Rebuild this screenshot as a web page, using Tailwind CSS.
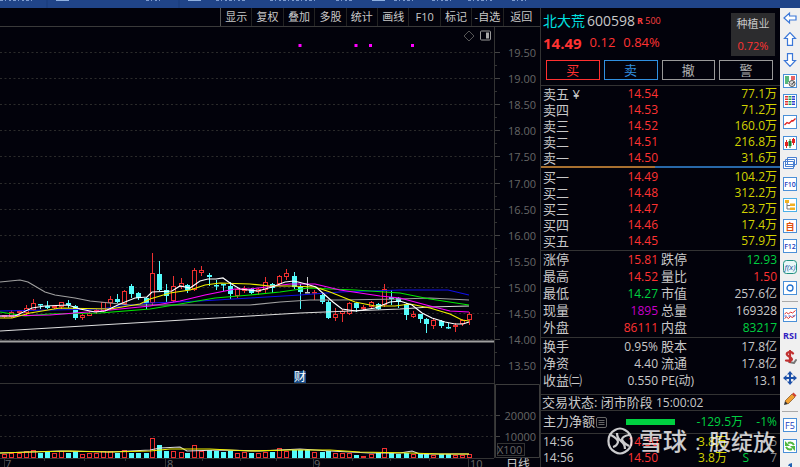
<!DOCTYPE html>
<html lang="zh-CN">
  <head>
    <meta charset="UTF-8" />
    <meta name="viewport" content="width=device-width, initial-scale=1.0" />
    <script src="https://cdn.jsdelivr.net/npm/@tailwindcss/browser@4"></script>
    <title>北大荒 600598</title>
  </head>

  <body class="h-screen flex flex-col overflow-hidden bg-[#02020b] text-[#c8c8c8] text-xs font-['Open_Sans','Noto_Sans_CJK_SC',sans-serif]">
    <!-- Window title strip -->
    <header class="h-2 shrink-0 bg-[#204488] overflow-hidden">
      <svg class="h-2 w-[800px]" viewBox="0 0 800 8" aria-hidden="true">
        <path d="M47 0v8M179 0v8" stroke="#183a78" />
        <path d="M56 0h13v1h-13zM188 0h13v1h-13zM372 0h13v1h-13z" fill="#8fb0e0" />
        <path d="M0 .5h32M146 .5h14M216 .5h30M270 .5h46M336 .5h16M394 .5h20M432 .5h22M468 .5h24M512 .5h14" stroke="#7f9cd0" stroke-dasharray="3 2 1 3 2 2" />
      </svg>
    </header>

    <div class="flex flex-1 min-h-0">
      <!-- Chart -->
      <main class="flex-1 min-w-0">
        <nav class="h-[19px] flex justify-end border-b border-[#3a3a3a]">
          <div class="grid grid-cols-10 w-[315px] mr-[5px] text-[11px] leading-[18px] whitespace-nowrap divide-x divide-[#222] border-l border-[#555]">
            <button>显示</button>
            <button>复权</button>
            <button>叠加</button>
            <button>多股</button>
            <button>统计</button>
            <button>画线</button>
            <button>F10</button>
            <button>标记</button>
            <button>-自选</button>
            <button class="pl-1">返回</button>
          </div>
        </nav>
        <svg id="chart" class="block w-full" viewBox="0 27 540 440">
          <g id="grid"></g>
          <g stroke="#333" fill="none">
            <path d="M494.5 27V458M0 383.5H494M0 458.5H494" />
            <path d="M495.5 384.5H539.5V457.5H495.5z" stroke="#3c3c3c" />
            <path d="M4.5 458v9M44.5 458v3M84.5 458v3M125.5 458v3M165.5 458v9M202.5 458v3M240.5 458v3M276.5 458v3M313.5 458v9M352.5 458v3M390.5 458v3M429.5 458v3M468.5 458v9" />
            <rect x="497.5" y="443.5" width="27" height="12" />
          </g>
          <g fill="#666" font-size="11">
            <text x="497" y="454">X100</text>
            <text x="5" y="468">7</text>
            <text x="167" y="468">8</text>
            <text x="314" y="468">9</text>
            <text x="470" y="468">10</text>
          </g>
          <text x="506" y="469" font-size="12" fill="#ccc">日线</text>
          <path d="M469 31l5 5l-5 5l-5 -5z" fill="none" stroke="#555" />
          <rect x="480.5" y="31" width="10" height="9" rx="1" fill="none" stroke="#999" />
          <path d="M486 32.5h3v6h-3z" fill="#aaa" />
          <path d="M298.500 44h3v3h-3zM354.500 44h3v3h-3zM369 44h3v3h-3zM411 44h3v3h-3z" fill="#f0f" />
          <path d="M0 341.500H494" stroke="#a0a0a0" stroke-width="2" />
          <rect x="294" y="371" width="12" height="12" fill="#174a85" />
          <text x="294" y="381" font-size="12" fill="#fff">财</text>
          <g id="candles"></g>
          <g id="lines" fill="none" stroke-width="1.200"></g>
        </svg>
      </main>

      <!-- Quote panel -->
      <section class="relative w-[240px] shrink-0 border-l border-[#333] overflow-hidden whitespace-nowrap">
        <div class="border-b border-[#333] pt-[5px] pb-[5px]">
          <div class="flex justify-between pl-[2px] pr-[5px]">
            <div>
              <h1 class="flex items-center h-4 text-sm">
                <span class="text-[#00e0e0]">北大荒</span>
                <span class="ml-[2px]">600598</span>
                <span class="ml-[2px] text-[9px] text-[#ff4040]"><b>R</b> 500</span>
              </h1>
              <p class="flex items-center gap-2 h-4 mt-[6px] text-[13px] text-[#ff3232]">
                <b class="text-[15px]">14.49</b>
                <span>0.12</span>
                <span>0.84%</span>
              </p>
            </div>
            <div class="w-11 h-[43px] bg-[#2c2c2e] text-[11px] text-center">
              <p class="leading-[22px]">种植业</p>
              <p class="leading-[21px] text-[#ff3232]">0.72%</p>
            </div>
          </div>
          <div class="grid grid-cols-4 gap-1 mt-1 pl-[5px] pr-[7px] text-[13px]">
            <button class="h-5 leading-[18px] border border-[#ff3030] text-[#ff3030]">买</button>
            <button class="h-5 leading-[18px] border border-[#3090e0] text-[#3090e0]">卖</button>
            <button class="h-5 leading-[18px] border border-[#999] text-[#b0b0b0]">撤</button>
            <button class="h-5 leading-[18px] border border-[#999] text-[#b0b0b0]">警</button>
          </div>
        </div>

        <!-- Order book -->
        <div class="pl-[2px] pr-[3px]">
          <table class="w-full table-fixed leading-4 text-right">
            <colgroup><col class="w-[50px]" /><col class="w-[65px]" /><col /></colgroup>
            <tbody class="[&_th]:text-left [&_th]:font-normal [&_th]:text-[13px] text-[#d2d200] [&_th]:text-[#c8c8c8]">
              <tr><th scope="row">卖五 ¥</th><td class="text-[#ff3232]">14.54</td><td>77.1万</td></tr>
              <tr><th scope="row">卖四</th><td class="text-[#ff3232]">14.53</td><td>71.2万</td></tr>
              <tr><th scope="row">卖三</th><td class="text-[#ff3232]">14.52</td><td>160.0万</td></tr>
              <tr><th scope="row">卖二</th><td class="text-[#ff3232]">14.51</td><td>216.8万</td></tr>
              <tr><th scope="row">卖一</th><td class="text-[#ff3232]">14.50</td><td>31.6万</td></tr>
            </tbody>
          </table>
        </div>
        <div class="flex h-[2px] mb-px">
          <div class="w-[114px] bg-[#a87030]"></div>
          <div class="flex-1 bg-[#2868a8]"></div>
        </div>
        <div class="pl-[2px] pr-[3px] pb-[1px] border-b border-[#333]">
          <table class="w-full table-fixed leading-4 text-right">
            <colgroup><col class="w-[50px]" /><col class="w-[65px]" /><col /></colgroup>
            <tbody class="[&_th]:text-left [&_th]:font-normal [&_th]:text-[13px] text-[#d2d200] [&_th]:text-[#c8c8c8]">
              <tr><th scope="row">买一</th><td class="text-[#ff3232]">14.49</td><td>104.2万</td></tr>
              <tr><th scope="row">买二</th><td class="text-[#ff3232]">14.48</td><td>312.2万</td></tr>
              <tr><th scope="row">买三</th><td class="text-[#ff3232]">14.47</td><td>23.7万</td></tr>
              <tr><th scope="row">买四</th><td class="text-[#ff3232]">14.46</td><td>17.4万</td></tr>
              <tr><th scope="row">买五</th><td class="text-[#ff3232]">14.45</td><td>57.9万</td></tr>
            </tbody>
          </table>
        </div>

        <!-- Statistics -->
        <div class="pl-[2px] pr-[3px] pb-[1px] border-b border-[#333]">
          <table class="w-full table-fixed leading-[17px] text-right">
            <colgroup><col class="w-[50px]" /><col class="w-[65px]" /><col class="w-[44px]" /><col /></colgroup>
            <tbody class="[&_th]:text-left [&_th]:font-normal [&_th]:text-[13px] [&_td+th]:pl-[3px]">
              <tr><th scope="row">涨停</th><td class="text-[#ff3232]">15.81</td><th scope="row">跌停</th><td class="text-[#00d040]">12.93</td></tr>
              <tr><th scope="row">最高</th><td class="text-[#ff3232]">14.52</td><th scope="row">量比</th><td class="text-[#ff3232]">1.50</td></tr>
              <tr><th scope="row">最低</th><td class="text-[#00d040]">14.27</td><th scope="row">市值</th><td>257.6亿</td></tr>
              <tr><th scope="row">现量</th><td class="text-[#c800c8]">1895</td><th scope="row">总量</th><td>169328</td></tr>
              <tr><th scope="row">外盘</th><td class="text-[#ff3232]">86111</td><th scope="row">内盘</th><td class="text-[#00d040]">83217</td></tr>
            </tbody>
          </table>
        </div>
        <div class="pl-[2px] pr-[3px] pb-[5px] border-b border-[#333]">
          <table class="w-full table-fixed leading-[17px] text-right">
            <colgroup><col class="w-[50px]" /><col class="w-[65px]" /><col class="w-[44px]" /><col /></colgroup>
            <tbody class="[&_th]:text-left [&_th]:font-normal [&_th]:text-[13px] [&_td+th]:pl-[3px]">
              <tr><th scope="row">换手</th><td>0.95%</td><th scope="row">股本</th><td>17.8亿</td></tr>
              <tr><th scope="row">净资</th><td>4.40</td><th scope="row">流通</th><td>17.8亿</td></tr>
              <tr><th scope="row">收益㈡</th><td>0.550</td><th scope="row"><span class="text-xs">PE(动)</span></th><td>13.1</td></tr>
            </tbody>
          </table>
        </div>
        <p class="pl-[1px] leading-[15px] border-b border-[#333]"><span class="text-[13px]">交易状态: 闭市阶段</span> 15:00:02</p>
        <div class="flex items-center h-[23px] pl-[2px] pr-[3px] border-b border-[#333] text-[#00d040]">
          <span class="text-[13px] text-[#c8c8c8]">主力净额</span>
          <svg class="w-[11px] h-[11px] ml-px" viewBox="0 0 11 11" fill="none" stroke="#666">
            <rect x=".5" y=".5" width="10" height="10" rx="1.500" />
            <path d="M2.500 3.500h6M2.500 5.500h6M2.500 7.500h6" />
          </svg>
          <div class="w-[49px] h-[6px] ml-[19px] bg-[#00d040]"></div>
          <span class="flex-1 text-right">-129.5万</span>
          <span class="w-[34px] text-right">-1%</span>
        </div>
        <table class="w-full table-fixed leading-4 text-right">
          <colgroup><col class="w-[50px]" /><col class="w-[67px]" /><col class="w-[69px]" /><col class="w-[22px]" /><col /></colgroup>
          <tbody>
            <tr><td class="text-left pl-[2px]">14:56</td><td class="text-[#ff3232]">14.50</td><td class="text-[#d2d200]">3.8万</td><td></td><td class="pr-[3px] text-[#888]">5</td></tr>
            <tr><td class="text-left pl-[2px]">14:56</td><td class="text-[#ff3232]">14.50</td><td class="text-[#d2d200]">3.8万</td><td class="text-[#00d040]">S</td><td class="pr-[3px] text-[#888]">7</td></tr>
          </tbody>
        </table>

        <!-- Watermark -->
        <div class="absolute right-[5px] bottom-3 flex items-center h-7 text-white/80 text-[22px] leading-7 font-medium">
          <svg class="w-7 h-7 mr-[5px]" viewBox="0 0 28 28" fill="none" stroke="currentColor" stroke-width="2.200">
            <path d="M9 3A12.500 12.500 0 0 0 9 25M19 3A12.500 12.500 0 0 1 19 25M9 3Q14 0 19 3M9 25Q14 28 19 25" />
            <path d="M5 8Q12 12 12 15Q11 19 7 20M11 6Q11 11 15 14T19 22M23 8Q17 9 16 12Q17 16 23 19" />
          </svg>
          <span class="text-2xl leading-7">雪球</span>
          <span class="w-[22px] text-center">:</span>
          <span>股绽放</span>
        </div>
      </section>

      <!-- Tool strip -->
      <aside class="w-5 shrink-0 overflow-hidden bg-[#f0f0f0] [&_button]:flex-1 [&_button]:flex [&_button]:items-center [&_button]:justify-center [&_svg]:w-[14px] [&_svg]:h-[14px]">
        <div class="flex flex-col h-[290px]">
          <button aria-label="后退"><svg viewBox="0 0 14 14" fill="#fff" stroke="#3c78d8" stroke-width="1.200"><path d="M1 7L6.500 2V5H13V9H6.500V12z" /></svg></button>
          <button aria-label="向上"><svg viewBox="0 0 14 14" fill="#fff" stroke="#3c78d8" stroke-width="1.200"><path d="M7 .6L12.500 6.500H9.500V13.400H4.500V6.500H1.500z" /></svg></button>
          <button aria-label="向下"><svg viewBox="0 0 14 14" fill="#fff" stroke="#3c78d8" stroke-width="1.200"><path d="M7 13.400L12.500 7.500H9.500V.6H4.500V7.500H1.500z" /></svg></button>
          <button aria-label="报价"><svg viewBox="0 0 14 14" fill="none"><rect x=".5" y=".5" width="13" height="13" fill="#fff" stroke="#4a90d8" /><path d="M2 3h4M2 5h4M2 7h4M2 9h3" stroke="#20a050" stroke-width="1.500" /><path d="M8 3h4M8 5h4" stroke="#e03030" stroke-width="1.500" /><circle cx="9" cy="9.500" r="3" fill="#ddd" stroke="#555" /><path d="M8 9.500l1 1l2-2.500" stroke="#333" /></svg></button>
          <button aria-label="列表"><svg viewBox="0 0 14 14" fill="none"><rect x=".5" y=".5" width="13" height="13" fill="#fff" stroke="#4a90d8" /><g stroke-width="3" stroke-dasharray="1.500 1"><path d="M3.500 2v10" stroke="#e03030" /><path d="M7 2v10" stroke="#20a050" /><path d="M10.500 2v10" stroke="#3040d0" /></g></svg></button>
          <button aria-label="分时"><svg viewBox="0 0 14 14" fill="none"><rect x=".5" y=".5" width="13" height="13" fill="#fff" stroke="#4a90d8" /><path d="M1.500 10L4 7.500L6 8.500L9 5.500L10 6L12.500 3.500" stroke="#e02020" stroke-width="1.300" /></svg></button>
          <button aria-label="K线"><svg viewBox="0 0 14 14" fill="none"><rect x=".5" y=".5" width="13" height="13" fill="#fff" stroke="#4a90d8" /><path d="M3.500 4v8M10.500 2v7" stroke="#e02020" /><path d="M2 6h3v4h-3zM9 3h3v4h-3z" fill="#e02020" /><path d="M7 3v9" stroke="#108030" /><path d="M5.500 5h3v5h-3z" fill="#108030" /></svg></button>
          <button aria-label="窗口"><svg viewBox="0 0 14 14" fill="#fff" stroke="#4a80d0"><path d="M4.500 1.500h9v7h-9zM2.500 3.500h9v7h-9zM.5 5.500h10v7H.5z" /><path d="M2.500 8.500h6M2.500 10.500h6" /></svg></button>
          <button aria-label="F10"><svg viewBox="0 0 14 14"><rect x=".5" y=".5" width="13" height="13" fill="#fff" stroke="#4a90d8" /><text x="7" y="10" font-size="7" font-weight="600" text-anchor="middle" fill="#2040c0">F10</text></svg></button>
          <button aria-label="板块"><svg viewBox="0 0 14 14" fill="none"><rect x=".5" y=".5" width="13" height="13" fill="#fff" stroke="#4ab0e8" /><path d="M4 4v7h3M4 7.500h3" stroke="#777" /><path d="M2 2h4v3H2zM7 5.500h5v2.500H7zM7 9.500h5V12H7z" fill="#f0b020" /></svg></button>
          <button aria-label="自选"><svg viewBox="0 0 14 14" fill="none"><rect x=".5" y=".5" width="13" height="13" fill="#fff" stroke="#4a90d8" /><text x="7" y="10.500" font-size="9" font-weight="bold" text-anchor="middle" fill="#e05010">自</text></svg></button>
          <button aria-label="F12"><svg viewBox="0 0 14 14"><rect x=".5" y=".5" width="13" height="13" fill="#fff" stroke="#4a90d8" /><text x="7" y="10" font-size="7" font-weight="600" text-anchor="middle" fill="#2040c0">F12</text></svg></button>
          <button aria-label="公式"><svg viewBox="0 0 14 14"><rect x=".5" y=".5" width="13" height="13" rx="3" fill="#e8f8f8" stroke="#209080" /><text x="7" y="10" font-size="8" font-style="italic" text-anchor="middle" fill="#2050a0">f(x)</text></svg></button>
          <button aria-label="周期"><svg viewBox="0 0 14 14"><rect x=".5" y=".5" width="13" height="13" fill="#fff" stroke="#4a90d8" /><circle cx="7" cy="7" r="3" fill="#fff" stroke="#2070d0" stroke-width="1.300" /></svg></button>
        </div>
        <hr class="mt-[3px] mb-[3px] mx-[2px] border-[#aaa]" />
        <div class="flex flex-col h-[104px]">
          <button aria-label="叠加"><svg viewBox="0 0 14 14" fill="none"><rect x=".5" y=".5" width="13" height="13" fill="#fff" stroke="#4a90d8" /><path d="M1.500 6l2-1.500l2 1.500l2-2l2 1l3-2.500M1.500 10.500l2-1.500l2 1.500l2-2l2 1l3-2.500" stroke="#e03030" /><path d="M1.500 8h11" stroke="#3050d0" stroke-dasharray="2 2" /></svg></button>
          <button class="text-[9px] font-bold text-[#3020c0]">RSI</button>
          <button aria-label="交易"><svg viewBox="0 0 14 14" fill="none" stroke-linecap="round"><path d="M6 12l5 1l2-3" stroke="#777" stroke-width="2" /><path d="M10 3.500Q8 1 5 2.500T6 6.500T8.500 10T3 10.500M7 1v11" stroke="#c03030" stroke-width="2.200" /></svg></button>
          <button aria-label="移动"><svg viewBox="0 0 14 14" fill="#1c50a8"><path d="M7 0l3 3.500H8V6h2.500V4L14 7l-3.500 3V8H8v2.500h2L7 14l-3-3.500h2V8H3.500v2L0 7l3.500-3v2H6V3.500H4z" /></svg></button>
          <button aria-label="画笔"><svg viewBox="0 0 14 14"><path d="M1 13l1-4l3 3z" fill="#333" /><path d="M2 9L9 2l3 3l-7 7z" fill="#f0a030" stroke="#805020" stroke-width=".7" /><path d="M9 2l1.500-1.500l3 3L12 5z" fill="#d04030" /></svg></button>
        </div>
        <hr class="mt-[2px] mb-[3px] mx-[2px] border-[#aaa]" />
        <div class="flex flex-col h-[62px]">
          <button aria-label="F5"><svg viewBox="0 0 14 14"><rect x=".5" y=".5" width="13" height="13" fill="#fff" stroke="#4a90d8" /><text x="7" y="10.500" font-size="9" text-anchor="middle" fill="#2040c0">F5</text></svg></button>
          <button aria-label="刷新"><svg viewBox="0 0 14 14" fill="none"><rect x=".5" y=".5" width="13" height="13" fill="#fff" stroke="#4a90d8" /><path d="M11 6Q9 2.500 5 4M3 8Q5 11.500 9 10" stroke="#50b840" stroke-width="2" /><path d="M2 2v5h5zM12 12V7H7z" fill="#50b840" /></svg></button>
          <button aria-label="更多"><svg viewBox="0 0 14 14" fill="#2060b0"><path d="M6 4l3-1v11H7V6H5z" /></svg></button>
        </div>
      </aside>
    </div>

    <script>
      // x, high, body top, body bottom, low, volume top, colour (r rise, c fall, w flat)
      const bars = [
        [4, 315, 315, 317, 318, 454, "r"], [11, 310, 312, 317, 318, 453, "r"],
        [19, 310, 311, 313, 315, 453, "r"], [26, 305, 308, 313, 315, 451, "r"],
        [33, 299, 303, 310, 311, 450, "r"], [40, 304, 304, 305, 309, 453, "c"],
        [47, 301, 306, 308, 309, 452, "c"], [54, 306, 306, 308, 309, 453, "r"],
        [61, 302, 302, 307, 309, 451, "r"], [68, 300, 303, 305, 308, 453, "c"],
        [75, 305, 306, 318, 320, 451, "c"], [82, 314, 315, 318, 320, 454, "r"],
        [89, 312, 313, 316, 316, 453, "r"], [96, 309, 310, 312, 314, 453, "r"],
        [103, 302, 302, 311, 312, 451, "r"], [110, 296, 299, 303, 310, 451, "r"],
        [117, 294, 299, 302, 303, 453, "c"], [124, 290, 291, 304, 305, 450, "r"],
        [131, 284, 286, 294, 298, 453, "c"], [138, 292, 293, 298, 300, 453, "c"],
        [146, 297, 298, 303, 309, 453, "c"], [152, 253, 273, 303, 305, 438, "r"],
        [159, 261, 274, 290, 291, 445, "c"], [166, 284, 290, 296, 302, 451, "c"],
        [173, 276, 286, 301, 302, 451, "r"], [181, 278, 283, 287, 289, 452, "r"],
        [187, 284, 285, 290, 293, 453, "c"], [194, 268, 270, 290, 291, 445, "r"],
        [201, 266, 270, 273, 276, 451, "r"], [209, 273, 275, 277, 286, 450, "c"],
        [216, 280, 285, 286, 290, 451, "c"], [223, 284, 284, 285, 291, 452, "c"],
        [230, 282, 286, 294, 299, 451, "c"], [237, 288, 289, 296, 298, 453, "r"],
        [244, 286, 288, 291, 293, 452, "r"], [251, 288, 289, 293, 294, 453, "c"],
        [258, 288, 289, 292, 295, 453, "r"], [265, 277, 282, 290, 293, 452, "r"],
        [272, 283, 284, 288, 293, 452, "c"], [279, 275, 276, 284, 285, 448, "r"],
        [286, 269, 273, 277, 280, 451, "r"], [294, 272, 276, 287, 289, 450, "c"],
        [300, 284, 287, 292, 309, 450, "c"], [307, 277, 292, 293, 293, 450, "w"],
        [314, 290, 292, 293, 300, 452, "r"], [322, 294, 295, 302, 304, 452, "c"],
        [328, 300, 302, 318, 319, 451, "c"], [335, 308, 314, 318, 321, 453, "r"],
        [342, 309, 311, 314, 322, 453, "r"], [349, 302, 303, 314, 315, 453, "r"],
        [356, 302, 303, 308, 312, 455, "c"], [363, 305, 307, 309, 310, 456, "r"],
        [371, 301, 302, 307, 309, 454, "r"], [378, 303, 304, 309, 310, 453, "c"],
        [384, 284, 289, 305, 307, 448, "r"], [391, 290, 297, 299, 305, 453, "c"],
        [398, 297, 298, 302, 308, 454, "c"], [406, 303, 304, 315, 320, 453, "c"],
        [413, 311, 314, 317, 318, 454, "r"], [420, 314, 314, 319, 323, 454, "c"],
        [426, 318, 319, 324, 333, 454, "c"], [433, 319, 320, 326, 329, 455, "r"],
        [441, 320, 321, 326, 328, 454, "c"], [448, 323, 327, 328, 329, 454, "c"],
        [455, 323, 325, 327, 332, 455, "r"], [462, 319, 320, 324, 326, 455, "r"],
        [469, 312, 314, 320, 325, 454, "r"],
      ];

      const lines = [
        ["#a0a0a0", "0,282 20,280 28,282 45,292 55,295 75,298 90,301 110,303 130,305 170,305 250,305 280,302 310,300 340,300 400,299 430,298 469,300"],
        ["#ddd", "0,331 50,328 100,325 150,322 200,319 250,316 300,313 350,311 400,309 430,307 469,306"],
        ["#1010e8", "0,311 50,310 100,309 130,305 150,303 200,301 250,298 300,295 340,292 400,290 448,290 469,295"],
        ["#00e800", "0,312 25,316 50,314 100,313 150,309 180,304 215,298 250,295 280,292 308,288 330,289 355,290 400,293 430,299 469,305"],
        ["#f0f", "0,316 50,315 100,311 150,306 180,301 205,295 235,289 250,289 290,284 315,284 340,290 380,296 400,298 430,306 450,311 469,312"],
        ["#f0f000", "0,318 12,318 30,313 60,308 110,309 140,304 150,299 170,293 190,290 205,285 220,283 250,284 270,286 290,286 315,287 330,292 355,302 375,306 395,306 410,304 430,308 450,314 462,320 469,321"],
        ["#fff", "0,316 15,316 32,308 45,306 68,305 80,309 95,312 105,311 120,304 135,298 147,297 152,292 172,291 180,286 190,288 200,281 208,279 216,279 223,278 230,283 240,289 258,291 272,287 285,282 294,281 306,284 316,287 325,295 333,302 342,309 356,311 375,308 390,302 400,301 412,305 422,313 432,318 445,322 455,324 463,324 469,322"],
        ["#ddd", "0,453 30,452 60,451 110,452 150,450 160,448 180,447 187,451 220,450 260,451 300,449 330,451 370,453 400,453 412,451 420,454 469,454"],
        ["#f0f000", "0,453 30,452 70,451 110,452 150,451 170,449 210,449 250,451 290,450 330,450 360,452 410,453 440,454 469,454"],
      ];

      const colours = { r: "#f03030", c: "#54fcfc", w: "#ccc" };

      // Dotted rows with their axis labels
      let grid = "";
      function gridRow(y, label, x) {
        grid += `<path d="M0 ${y}H493" stroke="#2b2b2b" stroke-dasharray="2 2.5"/>`;
        grid += `<path d="M495 ${y}h5" stroke="#444"/>`;
        grid += `<text x="${x}" y="${y + 4}" font-size="11" fill="#666" text-anchor="end">${label}</text>`;
      }
      for (let i = 0; i < 13; i++) {
        const y = Math.round(52 + i * 26.1) + 0.5;
        gridRow(y, (19.5 - i * 0.5).toFixed(2), 536);
        if (i < 12) grid += `<path d="M495 ${y + 13}h2" stroke="#333"/>`;
      }
      gridRow(415.5, "20000", 536);
      gridRow(436.5, "10000", 536);
      document.getElementById("grid").innerHTML = grid;

      let candles = "";
      for (const [x, high, top, bottom, low, vol, kind] of bars) {
        const c = colours[kind];
        const fill = kind === "r" ? "#02020b" : c;
        candles += `<path d="M${x + 0.5} ${high}V${low}" stroke="${c}"/>`;
        candles += `<rect x="${x - 1.5}" y="${top + 0.5}" width="4" height="${Math.max(bottom - top - 1, 0.5)}" fill="${fill}" stroke="${c}"/>`;
        const volColour = kind === "r" ? c : colours.c;
        candles += `<rect x="${x - 1.5}" y="${vol + 0.5}" width="4" height="${457 - vol}" fill="${kind === "r" ? fill : volColour}" stroke="${volColour}"/>`;
      }
      document.getElementById("candles").innerHTML = candles;
      document.getElementById("lines").innerHTML = lines
        .map(([c, pts]) => `<polyline points="${pts}" stroke="${c}"/>`)
        .join("");
    </script>
  </body>
</html>
